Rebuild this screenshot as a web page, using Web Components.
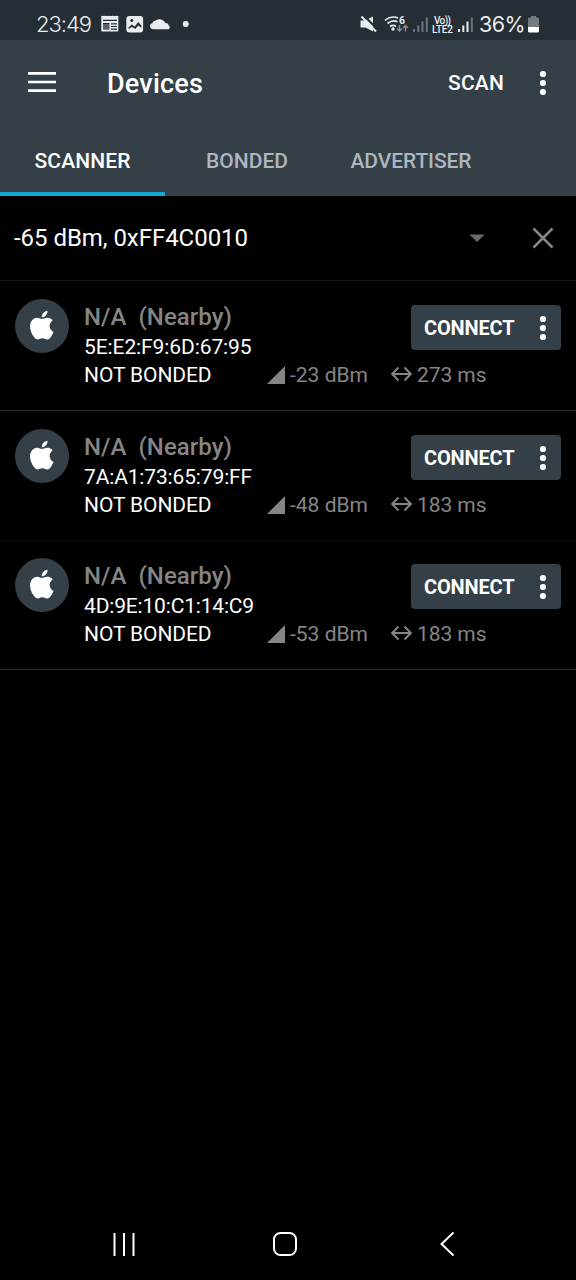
<!DOCTYPE html>
<html lang="en">
<head>
<meta charset="utf-8">
<title>Devices</title>
<style>
html,body{margin:0;background:#000}
body{font-family:Roboto,"Liberation Sans",sans-serif;color:#fff}
</style>
</head>
<body>
<scanner-app></scanner-app>
<script>
const define = (name, html, setup) => {
  const tpl = document.createElement('template');
  tpl.innerHTML = html;
  customElements.define(name, class extends HTMLElement {
    constructor() {
      super();
      this.attachShadow({mode: 'open'}).append(tpl.content.cloneNode(true));
    }
    connectedCallback() { if (setup) setup(this, this.shadowRoot); }
  });
};

/* One line of text, tracked so that its advance equals the given width. */
define('fit-text', `<style>:host{display:flex;flex:none}span{display:block;flex:none;white-space:pre}</style><span><slot></slot></span>`, (el, root) => {
  const span = root.querySelector('span');
  const want = parseFloat(el.getAttribute('width'));
  const n = el.textContent.length;
  el.style.width = want + 'px';
  span.style.letterSpacing = (want - span.getBoundingClientRect().width) / n + 'px';
});

define('more-dots', `
<style>:host{display:block;width:8px;height:26px}svg{display:block}</style>
<svg width="8" height="26" fill="#fff"><circle cx="4" cy="4" r="3.1"/><circle cx="4" cy="13" r="3.1"/><circle cx="4" cy="22" r="3.1"/></svg>`);

define('status-bar', `
<style>
:host{display:flex;align-items:center;height:40px;background:#252e35;color:#e9edf0;font:400 21.5px/26px Inter,Roboto,sans-serif;box-sizing:border-box;padding:8px 36px 6px 36px}
svg{display:block;flex:none}
fit-text{margin-top:5px}
.time{font-weight:300;font-size:22px}
.gap{flex:1}
</style>
<fit-text class="time" width="55">23:49</fit-text>
<svg width="98" height="26" fill="#e9edf0" style="margin-left:1px">
  <path d="M9.300 9h17v14.500q0 1-1 1h-15q-1 0-1-1z" transform="translate(0 -1)"/>
  <path d="M9.500 9l1-1.600 1 1.600 1.300-1.600 1.300 1.600 1.300-1.600 1.300 1.600 1.300-1.600 1.300 1.600 1.300-1.600 1.300 1.600 1.300-1.600 1.300 1.600 1-1.600.8 1.600z"/>
  <path d="M11 12.300h14M11 15.500h6.500M19 15.800h6M19 18.500h6M19 21.200h6" stroke="#252e35" stroke-width="1.200" fill="none"/>
  <path d="M11 16h6.500v5.700H11z" fill="#59626a"/>
  <rect x="34.300" y="8" width="16.800" height="16.500" rx="3"/>
  <circle cx="39.800" cy="12.500" r="1.500" fill="#252e35"/>
  <path d="M36.500 21v-1.500l3.300-3 2.900 2 3.600-4.500 3 3.500v2.500l-3-2.500-3 3.500-3.300-2z" fill="#252e35"/>
  <path d="M61 21.200a3 3 0 0 1-.8-5.900 4.500 4.500 0 0 1 3.600-2.700 6 5.500 0 0 1 9.500 2.400 3 3 0 0 1 3.500 2.500 2.200 2.200 0 0 1 0 3.700z"/>
  <circle cx="93.700" cy="16" r="3"/>
</svg>
<div class="gap"></div>
<svg width="119" height="26" fill="#e9edf0">
  <path d="M.5 12.500h4.500L13 8.500v15l-7.500-4h-5z"/>
  <path d="M3.500 7l14 14.500" stroke="#252e35" stroke-width="2"/>
  <path d="M1.500 8.500L16 23.500" stroke="#e9edf0" stroke-width="2"/>
  <g fill="none" stroke="#e9edf0" stroke-width="1.700"><path d="M25 12.300q6-5 13-2.400M27.500 15.500q5-4 10-1.800M30 18.500q3-2.300 6 0"/></g>
  <circle cx="33" cy="21" r="1.700"/>
  <text x="39" y="16" font-family="Roboto" font-size="10.500" font-weight="700">6</text>
  <g stroke="#8b949b" stroke-width="1.400" fill="none"><path d="M39.500 17v6m-2.400-2.400l2.400 2.400 2.400-2.400M45.500 23.500v-6m-2.400 2.400l2.400-2.400 2.400 2.400"/></g>
  <g fill="#6c757c"><rect x="53" y="21" width="2" height="3"/><rect x="57.300" y="17.500" width="2" height="6.500"/><rect x="61.500" y="13.500" width="2" height="10.500"/><rect x="65.800" y="9.500" width="2" height="14.500"/></g>
  <g font-family="Roboto" font-weight="500"><text x="74" y="15.800" font-size="10" textLength="17">Vo))</text><text x="72" y="24.500" font-size="10" textLength="21">LTE2</text></g>
  <rect x="98" y="21" width="2" height="3"/><rect x="102.300" y="17.500" width="2" height="6.500"/><rect x="106.500" y="13.500" width="2" height="10.500"/><rect x="110.800" y="9.500" width="2" height="14.500" fill="#6c757c"/>
</svg>
<fit-text width="46" style="margin-right:2px">36%</fit-text>
<svg width="13" height="26"><path d="M4 8h5v1.500h1.500q1.500 0 1.500 1.500V20H1v-9q0-1.500 1.500-1.500H4z" fill="#737b81"/><path d="M1 19h11v4q0 1.500-1.500 1.500h-8Q1 24.500 1 23z" fill="#fff"/></svg>`);

define('app-bar', `
<style>
:host{display:flex;align-items:center;height:84px;background:#343f48;padding:0 28px;box-sizing:border-box;font-weight:500}
.title{font-size:27px;line-height:32px;margin:3px auto 0 51px}
.scan{font-size:21px;line-height:26px;margin-top:2px}
svg{display:block}
more-dots{margin:1px 1px 0 35px}
</style>
<svg width="28" height="20"><path d="M0 1.400h28M0 10h28M0 18.600h28" stroke="#fff" stroke-width="2.600"/></svg>
<fit-text class="title" width="96">Devices</fit-text>
<fit-text class="scan" width="56">SCAN</fit-text>
<more-dots></more-dots>`);

define('tab-item', `
<style>
:host{display:flex;justify-content:center;align-items:center;height:72px;box-sizing:border-box;padding-top:6px;border-bottom:4px solid transparent;color:#aeb6bf;font-weight:500;font-size:21px;line-height:26px}
:host([active]){color:#fff;border-color:#12a8cf}
</style><slot></slot>`);

define('tab-strip', `
<style>:host{display:grid;grid-template-columns:165px 164px 164px;background:#343f48}</style>
<tab-item active><fit-text width="96">SCANNER</fit-text></tab-item>
<tab-item><fit-text width="82">BONDED</fit-text></tab-item>
<tab-item><fit-text width="121">ADVERTISER</fit-text></tab-item>`);

define('filter-bar', `
<style>
:host{display:flex;align-items:center;height:85px;box-sizing:border-box;padding:0 22px 0 14px;border-bottom:1px solid #181818;font-size:24px;line-height:30px}
fit-text{margin-right:auto}
svg{display:block}
</style>
<fit-text width="234">-65 dBm, 0xFF4C0010</fit-text>
<svg width="16" height="8" style="margin-right:47px"><path d="M.5.500h15L8 8z" fill="#6c6c6c"/></svg>
<svg width="22" height="22"><path d="M1.500 1.500l19 19M20.500 1.500l-19 19" stroke="#858585" stroke-width="2.500"/></svg>`);

define('connect-button', `
<style>
:host{display:flex;align-items:center;width:150px;height:45px;box-sizing:border-box;padding:0 14px 0 13px;background:#343f48;border-radius:4px;font-weight:700;font-size:20px;line-height:26px}
more-dots{margin-left:auto}
fit-text{margin-top:1px}
</style>
<fit-text width="90.500">CONNECT</fit-text><more-dots></more-dots>`);

define('device-row', `
<style>
:host{display:grid;grid-template-columns:69px 327px 150px;height:130px;box-sizing:border-box;padding:18px 15px 0;border-bottom:1px solid #2c2c2c;font-size:21px}
:host([faint]){border-color:#0b0b0b}
:host(:last-child){margin-top:-1px}
.logo{display:block}
connect-button{margin-top:6px}
.info{padding-top:3px;min-width:0}
.name{color:#858585;font-weight:500;font-size:24px;line-height:30px}
.meta{display:flex;align-items:center;line-height:28px;color:#858585;white-space:nowrap;width:420px;margin-top:-.6px}
.bond{color:#fff}
.meta svg{display:block;flex:none}
::slotted([slot=address]){line-height:29px;margin-top:1px}
::slotted([slot=rssi]),::slotted([slot=interval]){margin-left:5px}
</style>
<svg class="logo" width="54" height="54"><circle cx="27" cy="27" r="27" fill="#343f48"/><path fill="#fff" transform="translate(12.400 11.700) scale(1.200)" d="M12.152 6.896c-.948 0-2.415-1.078-3.960-1.040-2.040.027-3.910 1.183-4.961 3.014-2.117 3.675-.546 9.103 1.519 12.090 1.013 1.454 2.208 3.090 3.792 3.039 1.520-.065 2.090-.987 3.935-.987 1.831 0 2.350.987 3.960.948 1.637-.026 2.676-1.480 3.676-2.948 1.156-1.688 1.636-3.325 1.662-3.415-.039-.013-3.182-1.221-3.220-4.857-.026-3.040 2.480-4.494 2.597-4.559-1.429-2.090-3.623-2.324-4.390-2.376-2-.156-3.675 1.090-4.610 1.090zM15.530 3.830c.843-1.012 1.400-2.427 1.245-3.830-1.207.052-2.662.805-3.532 1.818-.780.896-1.454 2.338-1.273 3.714 1.338.104 2.715-.688 3.559-1.701"/></svg>
<div class="info">
  <fit-text class="name" width="148">N/A  (Nearby)</fit-text>
  <slot name="address"></slot>
  <div class="meta">
    <fit-text class="bond" width="127.500">NOT BONDED</fit-text>
    <svg width="18" height="18" style="margin:-1px 0 0 55.500px"><path d="M18 0v18H0z" fill="#858585"/></svg>
    <slot name="rssi"></slot>
    <svg width="21" height="16" style="margin:-2px 0 0 23px"><path d="M1.500 8h18M7.500 1.500L1.200 8l6.300 6.500M13.500 1.500L19.800 8l-6.300 6.500" fill="none" stroke="#858585" stroke-width="1.900"/></svg>
    <slot name="interval"></slot>
  </div>
</div>
<connect-button></connect-button>`);

define('nav-bar', `
<style>
:host{display:grid;grid-template-columns:161px 161px 161px;justify-items:center;align-items:center;height:72px;padding-left:43.500px;box-sizing:border-box}
svg{display:block}
</style>
<svg width="24" height="24"><path d="M2.500 1v23M12 1v23M21.500 1v23" stroke="#fff" stroke-width="2"/></svg>
<svg width="26" height="26"><rect x="2" y="2" width="22" height="22" rx="6.500" fill="none" stroke="#fff" stroke-width="2"/></svg>
<svg width="16" height="26" style="margin-left:2px"><path d="M14.500 1.500L2.500 13l12 11.500" fill="none" stroke="#fff" stroke-width="2"/></svg>`);

define('scanner-app', `
<style>
:host{display:flex;flex-direction:column;width:576px;height:1280px;background:#000;overflow:hidden}
main{flex:1}
</style>
<status-bar></status-bar>
<app-bar></app-bar>
<tab-strip></tab-strip>
<filter-bar></filter-bar>
<main>
  <device-row><fit-text slot="address" width="167.500">5E:E2:F9:6D:67:95</fit-text><fit-text slot="rssi" width="78">-23 dBm</fit-text><fit-text slot="interval" width="69.500">273 ms</fit-text></device-row>
  <device-row faint><fit-text slot="address" width="168">7A:A1:73:65:79:FF</fit-text><fit-text slot="rssi" width="78">-48 dBm</fit-text><fit-text slot="interval" width="69.500">183 ms</fit-text></device-row>
  <device-row><fit-text slot="address" width="170">4D:9E:10:C1:14:C9</fit-text><fit-text slot="rssi" width="78">-53 dBm</fit-text><fit-text slot="interval" width="69.500">183 ms</fit-text></device-row>
</main>
<nav-bar></nav-bar>`);
</script>
</body>
</html>
